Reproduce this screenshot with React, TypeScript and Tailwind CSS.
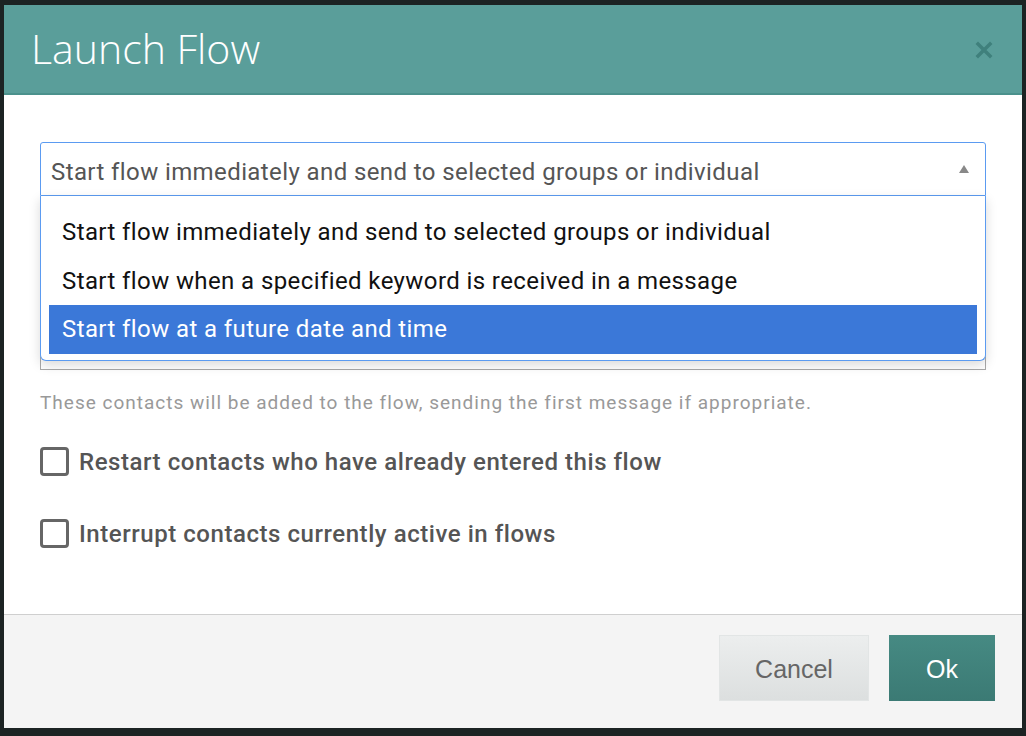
import React from 'react';

const options = [
  'Start flow immediately and send to selected groups or individual',
  'Start flow when a specified keyword is received in a message',
  'Start flow at a future date and time',
];

const Checkbox: React.FC<{ label: string }> = ({ label }) => (
  <label className="flex items-center gap-[10px] h-[30px]">
    <span className="w-[29px] h-[29px] border-[3px] border-[#666] rounded-[4px] bg-white shrink-0" />
    <span className="text-[24px] font-medium text-[#555] leading-none tracking-[0.55px]">{label}</span>
  </label>
);

export default function App() {
  return (
    <div
      className="w-[1026px] h-[736px] bg-[#1c2323] pt-[5px] pl-[4px] pr-[4px] pb-[8px]"
      style={{ fontFamily: 'Roboto, "Liberation Sans", sans-serif' }}
    >
      <div className="flex flex-col h-full bg-white">
        <div className="h-[90px] bg-[#5a9e9a] border-b-2 border-[#4b918c] flex items-center justify-between pl-[27px] pr-[29px] shrink-0">
          <h1 className="text-[41px] font-light text-white" style={{ fontFamily: '"Open Sans", Roboto, sans-serif' }}>
            Launch Flow
          </h1>
          <svg width="18" height="18" viewBox="0 0 18 18" className="mt-[2px]">
            <path d="M3 3 L15 15 M15 3 L3 15" stroke="#3f807c" strokeWidth="3.5" strokeLinecap="square" />
          </svg>
        </div>

        <div className="flex-1 px-[36px] pt-[47px]">
          <div className="relative">
            <div className="h-[54px] border border-[#5b9bf1] rounded-t-[3px] flex items-center justify-between pl-[10px] pr-[15px] pt-[5px]">
              <span className="text-[24px] text-[#555] tracking-[0.4px]">{options[0]}</span>
              <svg width="12" height="10" viewBox="0 0 12 10" className="-mt-[5px]">
                <path d="M6 1 L11 9 L1 9 Z" fill="#888" />
              </svg>
            </div>
            <div className="h-[174px] border border-[#a9a9a9] border-t-0" />
            <div className="absolute left-0 right-0 top-[54px] h-[165px] bg-white border border-t-0 border-[#5b9bf1] rounded-b-[6px] shadow-[0_4px_12px_rgba(0,0,0,0.15)] pt-[12px] px-[8px]">
              {options.map((o, i) => (
                <div
                  key={o}
                  className={`h-[48.5px] flex items-center pl-[13px] text-[24px] tracking-[0.4px] ${
                    i === 2 ? 'bg-[#3b78d8] text-white' : 'text-[#111]'
                  }`}
                >
                  {o}
                </div>
              ))}
            </div>
          </div>

          <p className="mt-[19px] text-[19px] text-[#999] tracking-[1px]">
            These contacts will be added to the flow, sending the first message if appropriate.
          </p>

          <div className="mt-[29px] flex flex-col gap-[42px]">
            <Checkbox label="Restart contacts who have already entered this flow" />
            <Checkbox label="Interrupt contacts currently active in flows" />
          </div>
        </div>

        <div className="h-[114px] shrink-0 bg-[#f4f4f4] border-t border-[#cfcfcf] flex justify-end items-start gap-[20px] pt-[20px] pr-[27px]">
          <button
            className="w-[150px] h-[66px] bg-gradient-to-b from-[#eceeee] to-[#dcdfdf] border border-[#e2e5e5] text-[25px] text-[#666] pt-[3px]"
            style={{ fontFamily: '"Liberation Sans", Arial, sans-serif' }}
          >
            Cancel
          </button>
          <button
            className="w-[106px] h-[66px] bg-gradient-to-b from-[#468a83] to-[#3b7a74] text-[25px] text-white pt-[3px]"
            style={{ fontFamily: '"Liberation Sans", Arial, sans-serif' }}
          >
            Ok
          </button>
        </div>
      </div>
    </div>
  );
}
